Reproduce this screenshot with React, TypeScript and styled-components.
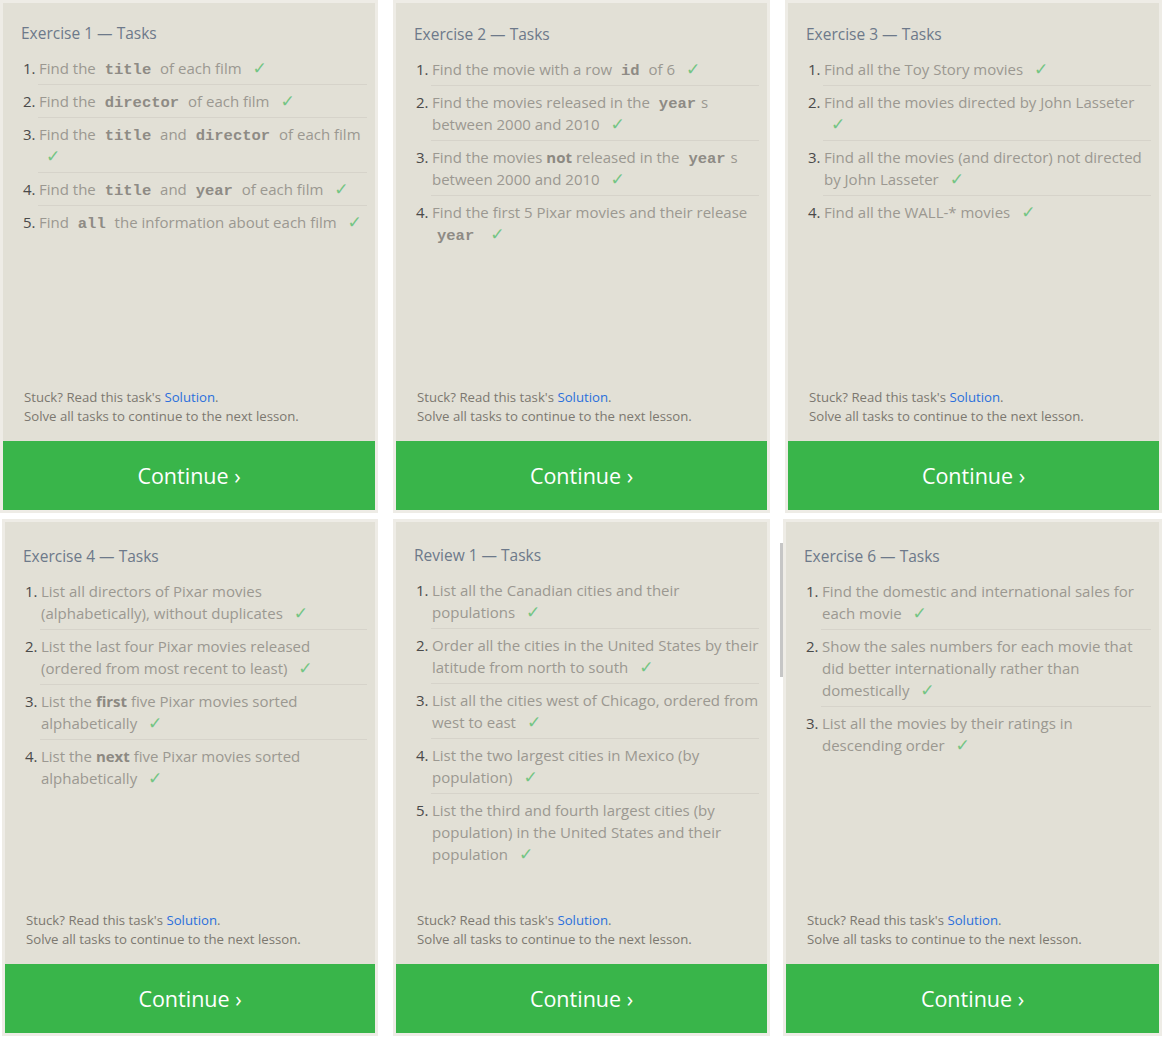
import React from "react";
import styled, { createGlobalStyle } from "styled-components";

type Seg = string | { code: string } | { b: string };
type CardData = {
  title: string;
  tasks: Seg[][];
  h: number;
  shift: number;
  top: number;
  thumb?: boolean;
};

const cards: CardData[] = [
  {
    title: "Exercise 1 — Tasks",
    h: 513,
    shift: 0,
    top: 18,
    tasks: [
      ["Find the", { code: "title" }, "of each film"],
      ["Find the", { code: "director" }, "of each film"],
      ["Find the", { code: "title" }, "and", { code: "director" }, "of each film"],
      ["Find the", { code: "title" }, "and", { code: "year" }, "of each film"],
      ["Find", { code: "all" }, "the information about each film"],
    ],
  },
  {
    title: "Exercise 2 — Tasks",
    h: 513,
    shift: 1,
    top: 19,
    tasks: [
      ["Find the movie with a row", { code: "id" }, "of 6"],
      ["Find the movies released in the", { code: "year" }, "+s between 2000 and 2010"],
      ["Find the movies ", { b: "not" }, " released in the", { code: "year" }, "+s between 2000 and 2010"],
      ["Find the first 5 Pixar movies and their release", { code: "year" }],
    ],
  },
  {
    title: "Exercise 3 — Tasks",
    h: 513,
    shift: 1,
    top: 19,
    tasks: [
      ["Find all the Toy Story movies"],
      ["Find all the movies directed by John Lasseter"],
      ["Find all the movies (and director) not directed by John Lasseter"],
      ["Find all the WALL-* movies"],
    ],
  },
  {
    title: "Exercise 4 — Tasks",
    h: 517,
    shift: 2,
    top: 22,
    tasks: [
      ["List all directors of Pixar movies (alphabetically), without duplicates"],
      ["List the last four Pixar movies released (ordered from most recent to least)"],
      ["List the ", { b: "first" }, " five Pixar movies sorted alphabetically"],
      ["List the ", { b: "next" }, " five Pixar movies sorted alphabetically"],
    ],
  },
  {
    title: "Review 1 — Tasks",
    h: 517,
    shift: 1,
    top: 21,
    tasks: [
      ["List all the Canadian cities and their populations"],
      ["Order all the cities in the United States by their latitude from north to south"],
      ["List all the cities west of Chicago, ordered from west to east"],
      ["List the two largest cities in Mexico (by population)"],
      ["List the third and fourth largest cities (by population) in the United States and their population"],
    ],
  },
  {
    title: "Exercise 6 — Tasks",
    h: 517,
    shift: -1,
    top: 22,
    thumb: true,
    tasks: [
      ["Find the domestic and international sales for each movie"],
      ["Show the sales numbers for each movie that did better internationally rather than domestically"],
      ["List all the movies by their ratings in descending order"],
    ],
  },
];

const Global = createGlobalStyle`
  html, body { margin: 0; padding: 0; background: #ffffff; }
  body { font-family: "Open Sans", "Noto Sans", sans-serif; }
`;

const Page = styled.main`
  display: grid;
  grid-template-columns: repeat(3, 378px);
  column-gap: 14px;
  row-gap: 6px;
  width: 1162px;
`;

const Card = styled.section<{ $h: number; $shift: number }>`
  position: relative;
  box-sizing: border-box;
  height: ${(p) => p.$h}px;
  margin-left: ${(p) => p.$shift}px;
  border: 3px solid #eeece6;
  background: #e2e0d6;
  display: flex;
  flex-direction: column;
`;

const Thumb = styled.div`
  position: absolute;
  left: -6px;
  top: 21px;
  width: 3px;
  height: 134px;
  background: #c6c6c6;
`;

const Body = styled.div<{ $top: number }>`
  flex: 1;
  padding: ${(p) => p.$top}px 8px 0 18px;
`;

const Title = styled.h2`
  margin: 0 0 7px 0;
  font-size: 15.5px;
  line-height: 24px;
  font-weight: 400;
  color: #6d798a;
`;

const List = styled.ol`
  list-style: none;
  margin: 0;
  padding: 0 0 0 3px;
`;

const Item = styled.li`
  display: flex;
  align-items: flex-start;
`;

const Num = styled.span`
  flex: 0 0 15px;
  margin-left: -1px;
  padding-top: 5px;
  font-size: 15px;
  line-height: 22px;
  color: #4a4a4a;
`;

const Text = styled.div<{ $first: boolean }>`
  flex: 1;
  padding: 5px 0 6px 1px;
  border-top: ${(p) => (p.$first ? "none" : "1px solid #d6d3ca")};
  margin-top: ${(p) => (p.$first ? "0" : "-1px")};
  font-size: 15px;
  line-height: 22px;
  color: #9b9891;
`;

const Code = styled.code`
  font-family: "Liberation Mono", "DejaVu Sans Mono", monospace;
  font-weight: 700;
  font-size: 15.5px;
  line-height: 1;
  color: #8e8b85;
  padding: 0 5px;
`;

const Strong = styled.b`
  font-weight: 700;
  color: #8c8982;
`;

const Check = styled.span`
  color: #74c584;
  margin-left: 7px;
  font-family: "DejaVu Sans", sans-serif;
  font-size: 17px;
  line-height: 1;
`;

const Footer = styled.div`
  padding: 0 8px 15px 21px;
  font-size: 13.2px;
  line-height: 19px;
  color: #7c7870;
`;

const Link = styled.a`
  color: #2a6fdc;
  text-decoration: none;
`;

const Button = styled.button`
  flex: 0 0 69px;
  border: none;
  margin: 0;
  width: 100%;
  background: #39b54a;
  color: #ffffff;
  font-family: "Open Sans", "Noto Sans", sans-serif;
  font-size: 21.5px;
  cursor: pointer;
`;

function renderSegs(segs: Seg[]) {
  const out: React.ReactNode[] = [];
  segs.forEach((s, i) => {
    if (typeof s === "string") {
      if (s.startsWith("+")) {
        out.push(<React.Fragment key={i}>{s.slice(1)}</React.Fragment>);
      } else {
        const prev = segs[i - 1];
        const next = segs[i + 1];
        let t = s;
        if (prev && typeof prev === "object" && "code" in prev) t = " " + t;
        if (next && typeof next === "object" && "code" in next) t = t + " ";
        out.push(<React.Fragment key={i}>{t}</React.Fragment>);
      }
    } else if ("code" in s) {
      out.push(<Code key={i}>{s.code}</Code>);
    } else {
      out.push(<Strong key={i}>{s.b}</Strong>);
    }
  });
  return out;
}

export default function App() {
  return (
    <>
      <Global />
      <Page>
        {cards.map((c, ci) => (
          <Card key={ci} $h={c.h} $shift={c.shift}>
            {c.thumb && <Thumb />}
            <Body $top={c.top}>
              <Title>{c.title}</Title>
              <List>
                {c.tasks.map((t, ti) => (
                  <Item key={ti}>
                    <Num>{ti + 1}.</Num>
                    <Text $first={ti === 0}>
                      {renderSegs(t)} <Check>✓</Check>
                    </Text>
                  </Item>
                ))}
              </List>
            </Body>
            <Footer>
              Stuck? Read this task's <Link href="#">Solution</Link>.
              <br />
              Solve all tasks to continue to the next lesson.
            </Footer>
            <Button>Continue ›</Button>
          </Card>
        ))}
      </Page>
    </>
  );
}
